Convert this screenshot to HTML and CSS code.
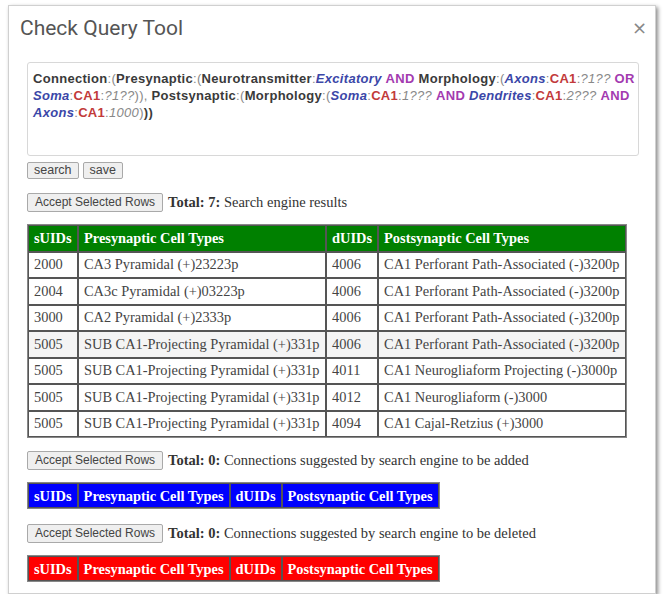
FILE: index.html
```html
<!DOCTYPE html>
<html>
<head>
<meta charset="utf-8">
<link rel="stylesheet" href="styles.css">
</head>
<body>
<div class="dialog">
  <div class="header">
    <span class="title">Check Query Tool</span>
    <span class="close">×</span>
  </div>
  <div class="content">
    <div class="query">
      <span class="k">Connection</span><span class="p">:(</span><span class="k">Presynaptic</span><span class="p">:(</span><span class="k">Neurotransmitter</span><span class="p">:</span><span class="v">Excitatory</span> <span class="op">AND</span> <span class="k">Morphology</span><span class="p">:(</span><span class="v">Axons</span><span class="p">:</span><span class="r">CA1</span><span class="p">:</span><span class="n">?1??</span> <span class="op">OR</span><br>
      <span class="v">Soma</span><span class="p">:</span><span class="r">CA1</span><span class="p">:</span><span class="n">?1??</span><span class="p">)), </span><span class="k">Postsynaptic</span><span class="p">:(</span><span class="k">Morphology</span><span class="p">:(</span><span class="v">Soma</span><span class="p">:</span><span class="r">CA1</span><span class="p">:</span><span class="n">1???</span> <span class="op">AND</span> <span class="v">Dendrites</span><span class="p">:</span><span class="r">CA1</span><span class="p">:</span><span class="n">2???</span> <span class="op">AND</span><br>
      <span class="v">Axons</span><span class="p">:</span><span class="r">CA1</span><span class="p">:</span><span class="n">1000</span><span class="p">)</span><span class="k">))</span>
    </div>
    <div class="btnrow">
      <button class="btn small">search</button>
      <button class="btn small">save</button>
    </div>
    <div class="section">
      <div class="acceptrow">
        <button class="btn">Accept Selected Rows</button>
        <span class="total"><b>Total: 7:</b> Search engine results</span>
      </div>
      <table class="grid green">
        <tr><th>sUIDs</th><th>Presynaptic Cell Types</th><th>dUIDs</th><th>Postsynaptic Cell Types</th></tr>
        <tr><td>2000</td><td>CA3 Pyramidal (+)23223p</td><td>4006</td><td>CA1 Perforant Path-Associated (-)3200p</td></tr>
        <tr><td>2004</td><td>CA3c Pyramidal (+)03223p</td><td>4006</td><td>CA1 Perforant Path-Associated (-)3200p</td></tr>
        <tr><td>3000</td><td>CA2 Pyramidal (+)2333p</td><td>4006</td><td>CA1 Perforant Path-Associated (-)3200p</td></tr>
        <tr class="hover"><td>5005</td><td>SUB CA1-Projecting Pyramidal (+)331p</td><td>4006</td><td>CA1 Perforant Path-Associated (-)3200p</td></tr>
        <tr><td>5005</td><td>SUB CA1-Projecting Pyramidal (+)331p</td><td>4011</td><td>CA1 Neurogliaform Projecting (-)3000p</td></tr>
        <tr><td>5005</td><td>SUB CA1-Projecting Pyramidal (+)331p</td><td>4012</td><td>CA1 Neurogliaform (-)3000</td></tr>
        <tr><td>5005</td><td>SUB CA1-Projecting Pyramidal (+)331p</td><td>4094</td><td>CA1 Cajal-Retzius (+)3000</td></tr>
      </table>
    </div>
    <div class="section">
      <div class="acceptrow">
        <button class="btn">Accept Selected Rows</button>
        <span class="total"><b>Total: 0:</b> Connections suggested by search engine to be added</span>
      </div>
      <table class="grid blue">
        <tr><th>sUIDs</th><th>Presynaptic Cell Types</th><th>dUIDs</th><th>Postsynaptic Cell Types</th></tr>
      </table>
    </div>
    <div class="section last">
      <div class="acceptrow">
        <button class="btn">Accept Selected Rows</button>
        <span class="total"><b>Total: 0:</b> Connections suggested by search engine to be deleted</span>
      </div>
      <table class="grid red">
        <tr><th>sUIDs</th><th>Presynaptic Cell Types</th><th>dUIDs</th><th>Postsynaptic Cell Types</th></tr>
      </table>
    </div>
  </div>
</div>
</body>
</html>
```
FILE: styles.css
```css
html, body {
  margin: 0;
  padding: 0;
  background: #ffffff;
}
body {
  padding: 5px 0 0 8px;
}
.dialog {
  width: 646px;
  height: 587px;
  border: 1px solid #d0d0d0;
  box-shadow: 2px 2px 4px rgba(0,0,0,0.45);
  background: #fff;
  box-sizing: content-box;
}
.header {
  display: flex;
  justify-content: space-between;
  align-items: center;
  padding: 4px 8px 0 11px;
  height: 40px;
}
.title {
  font-family: Roboto, "Noto Sans", sans-serif;
  font-size: 21px;
  color: #555;
  margin-top: -5px;
}
.close {
  font-family: "DejaVu Sans", sans-serif;
  font-size: 18px;
  color: #888;
  margin-top: -5px;
}
.content {
  padding: 12px 0 0 18px;
}
.query {
  width: 599px;
  height: 78px;
  border: 1px solid #d8d8d8;
  border-radius: 3px;
  padding: 7px 6px 7px 5px;
  font-family: "Liberation Sans", Arial, sans-serif;
  font-size: 13px;
  letter-spacing: 0.3px;
  line-height: 17px;
  white-space: nowrap;
  color: #333;
}
.k { font-weight: bold; color: #3a3a3a; }
.p { color: #888; }
.v { font-weight: bold; font-style: italic; color: #3b47a8; }
.op { font-weight: bold; color: #a33ab0; }
.r { font-weight: bold; color: #c23a3a; }
.n { font-style: italic; color: #888; }
.btnrow {
  display: flex;
  gap: 4px;
  margin-top: 6px;
}
.btn {
  font-family: "Liberation Sans", Arial, sans-serif;
  font-size: 12px;
  color: #444;
  background: #efefef;
  border: 1px solid #a9a9a9;
  border-radius: 2px;
  padding: 1px 7px;
  height: 19px;
  line-height: 15px;
  margin: 0;
}
.btn.small {
  font-size: 12.5px;
  height: 17px;
  line-height: 13px;
  padding: 1px 6px;
}
.section {
  margin-top: 14px;
}
.section + .section {
  margin-top: 13px;
}
.section.last {
  margin-top: 15px;
}
.acceptrow {
  display: flex;
  align-items: center;
  gap: 5px;
  font-family: "Liberation Serif", "Times New Roman", serif;
  font-size: 14.5px;
  color: #333;
}
.total b { color: #333; }
.grid {
  border-collapse: separate;
  border-spacing: 0;
  border: 1px solid #888;
  margin-top: 12px;
  font-family: "Liberation Serif", "Times New Roman", serif;
  font-size: 14.4px;
}
.grid th, .grid td {
  border: 1px solid #555;
  padding: 3px 5px 3px 5px;
  text-align: left;
  height: 18.5px;
  white-space: nowrap;
}
.grid.blue th, .grid.red th {
  height: 18px;
  padding: 3px 5px 2px 5px;
}
.grid th {
  color: #fff;
  font-weight: bold;
}
.grid td {
  color: #444;
}
.grid tr.hover td { background: #f4f4f4; }
.green th { background: #008000; }
.blue th { background: #0000ff; }
.red th { background: #ff0000; }
.grid.green { width: 600px; }
.grid.green td:nth-child(1), .grid.green th:nth-child(1),
.grid.green td:nth-child(3), .grid.green th:nth-child(3) { width: 38px; }
```
